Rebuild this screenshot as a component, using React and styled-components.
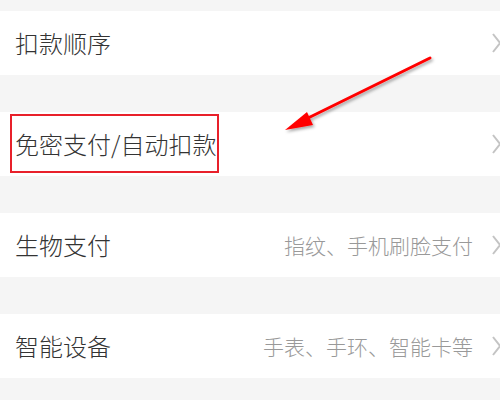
import React from "react";
import styled, { createGlobalStyle } from "styled-components";

const Global = createGlobalStyle`
  html, body { margin: 0; padding: 0; background: #f5f5f5; }
  body { width: 500px; height: 400px; overflow: hidden; font-family: "Noto Sans CJK SC", "Noto Sans", sans-serif; }
`;

const Page = styled.div`
  position: relative;
  width: 500px;
  height: 400px;
  background: #f5f5f5;
  padding-top: 11px;
  box-sizing: border-box;
  display: flex;
  flex-direction: column;
  gap: 37px;
`;

const Row = styled.div`
  height: 64px;
  background: #fff;
  display: flex;
  align-items: center;
  padding-left: 15px;
  overflow: hidden;
`;

const Label = styled.span`
  position: relative;
  font-size: 24px;
  font-weight: 300;
  color: #333;
  line-height: 1;
  flex: 1;
  white-space: nowrap;
`;

const Highlight = styled.span`
  position: absolute;
  left: -5px;
  top: -18px;
  width: 209px;
  height: 59px;
  box-sizing: border-box;
  border: 2px solid #e8202a;
`;

const Value = styled.span`
  font-size: 21px;
  font-weight: 300;
  color: #999;
  line-height: 1;
  white-space: nowrap;
  margin-right: 19px;
`;

const Chevron = () => (
  <svg width="8" height="22" viewBox="0 0 8 22" style={{ flexShrink: 0 }}>
    <polyline points="1,2 8,11 1,20" fill="none" stroke="#c4c4c4" strokeWidth="2" />
  </svg>
);

const Arrow = styled.svg`
  position: absolute;
  left: 0;
  top: 0;
  pointer-events: none;
`;

export default function App() {
  return (
    <>
      <Global />
      <Page>
        <Row>
          <Label>扣款顺序</Label>
          <Chevron />
        </Row>
        <Row>
          <Label>
            免密支付/自动扣款
            <Highlight />
          </Label>
          <Chevron />
        </Row>
        <Row>
          <Label>生物支付</Label>
          <Value>指纹、手机刷脸支付</Value>
          <Chevron />
        </Row>
        <Row>
          <Label>智能设备</Label>
          <Value>手表、手环、智能卡等</Value>
          <Chevron />
        </Row>
        <Arrow width="500" height="400" viewBox="0 0 500 400">
          <defs>
            <filter id="sh" x="-20%" y="-20%" width="140%" height="140%">
              <feDropShadow dx="1.5" dy="2" stdDeviation="1.5" floodColor="#000" floodOpacity="0.35" />
            </filter>
          </defs>
          <g filter="url(#sh)">
            <line x1="430" y1="58" x2="304" y2="120" stroke="#f00" strokeWidth="3" strokeLinecap="round" />
            <polygon points="285,130 307,112 313,125" fill="#f00" />
          </g>
        </Arrow>
      </Page>
    </>
  );
}
